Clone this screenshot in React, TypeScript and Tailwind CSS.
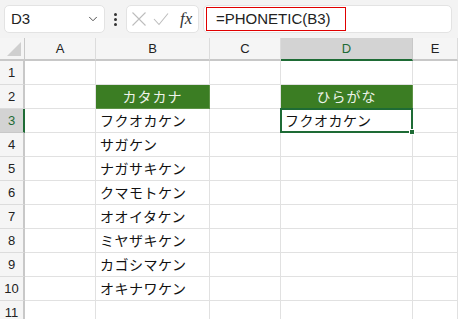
import { ChevronDown } from 'lucide-react'

const cols = ['A', 'B', 'C', 'D', 'E']
const katakana = ['フクオカケン', 'サガケン', 'ナガサキケン', 'クマモトケン', 'オオイタケン', 'ミヤザキケン', 'カゴシマケン', 'オキナワケン']

const jp = { fontFamily: '"Noto Sans CJK JP", "Noto Sans", sans-serif' }
const ui = { fontFamily: '"Liberation Sans", Arial, sans-serif' }

function Cell({ row, col }: { row: number; col: number }) {
  if (row === 2 && col === 1) {
    return (
      <div className="bg-[#3b7d23] border-r border-b border-[#5d9246] flex items-center justify-center text-[14px] text-[#eef3ea] tracking-[1px]" style={jp}>
        カタカナ
      </div>
    )
  }
  if (row === 2 && col === 3) {
    return (
      <div className="bg-[#3b7d23] border-r border-b border-[#5d9246] flex items-center justify-center text-[14px] text-[#eef3ea] tracking-[1px]" style={jp}>
        ひらがな
      </div>
    )
  }
  if (row === 3 && col === 3) {
    return (
      <div className="relative bg-white border-2 border-[#1e6b35] -mt-px -ml-px flex items-center pl-[3px] text-[14px] text-[#111] tracking-[0.5px]" style={jp}>
        フクオカケン
        <div className="absolute -right-[4px] -bottom-[4px] w-[6px] h-[6px] bg-[#1e6b35] border border-white" />
      </div>
    )
  }
  const text = col === 1 && row >= 3 && row <= 10 ? katakana[row - 3] : ''
  return (
    <div className="bg-white border-r border-b border-[#e1e1e1] flex items-center pl-[4px] text-[14px] text-[#111] tracking-[0.5px]" style={jp}>
      {text}
    </div>
  )
}

export default function App() {
  const rows = Array.from({ length: 11 }, (_, i) => i + 1)
  return (
    <div className="w-[458px] h-[319px] overflow-hidden bg-white" style={ui}>
      {/* Toolbar */}
      <div className="h-[38px] bg-[#f3f3f3] flex items-center pl-[4px] gap-0">
        <div className="w-[101px] h-[28px] bg-white border border-[#e3e3e3] rounded-[5px] flex items-center justify-between pl-[6px] pr-[4px]">
          <span className="text-[15px] text-[#222]">D3</span>
          <ChevronDown className="w-[14px] h-[14px] text-[#444]" strokeWidth={1.6} />
        </div>
        <div className="w-[21px] flex flex-col items-center gap-[2px]">
          <div className="w-[3px] h-[3px] bg-[#333] rounded-full" />
          <div className="w-[3px] h-[3px] bg-[#333] rounded-full" />
          <div className="w-[3px] h-[3px] bg-[#333] rounded-full" />
        </div>
        <div className="w-[73px] h-[28px] bg-white border border-[#e3e3e3] rounded-[5px] flex items-center pl-[4px] gap-[6px]">
          <svg width="16" height="16" viewBox="0 0 16 16" fill="none" stroke="#bdbdbd" strokeWidth="1.1">
            <path d="M1.5 1.5 L14.5 14.5 M14.5 1.5 L1.5 14.5" />
          </svg>
          <svg width="16" height="16" viewBox="0 0 16 16" fill="none" stroke="#bdbdbd" strokeWidth="1.1">
            <path d="M1 8 L6 13.5 L15 2.5" />
          </svg>
          <span className="ml-[5px] text-[17px] italic text-[#333]" style={{ fontFamily: '"Liberation Serif", serif' }}>fx</span>
        </div>
        <div className="ml-[4px] w-[249px] h-[28px] bg-white border border-[#e3e3e3] rounded-[5px] flex items-center pl-[2px]">
          <div className="w-[140px] h-[24px] border-[1.5px] border-[#e00000] flex items-center pl-[9px] text-[15px] text-[#222]">
            =PHONETIC(B3)
          </div>
        </div>
      </div>

      {/* Grid */}
      <div className="grid grid-cols-[25px_71px_114px_71px_132px_45px] grid-rows-[23px_repeat(11,24px)]">
        <div className="bg-[#f5f5f5] border-r border-b-2 border-[#c8c8c8] relative">
          <div className="absolute right-[3px] bottom-[3px] w-0 h-0 border-l-[14px] border-l-transparent border-b-[14px] border-b-[#cfcfcf]" />
        </div>
        {cols.map((c, i) =>
          i === 3 ? (
            <div key={c} className="bg-[#d3d3d3] border-r border-[#c8c8c8] border-b-2 border-b-[#1e6b35] flex items-center justify-center text-[13px] text-[#1e6b35]">
              {c}
            </div>
          ) : (
            <div key={c} className="bg-[#f5f5f5] border-r border-[#dcdcdc] border-b-2 border-b-[#c8c8c8] flex items-center justify-center text-[13px] text-[#222]">
              {c}
            </div>
          )
        )}
        {rows.map((r) => (
          <div key={r} className="contents">
            {r === 3 ? (
              <div className="bg-[#d3d3d3] border-r-2 border-r-[#1e6b35] border-b border-[#c8c8c8] flex items-center justify-center text-[13px] text-[#1e6b35]">
                {r}
              </div>
            ) : (
              <div className="bg-[#f5f5f5] border-r-2 border-r-[#c8c8c8] border-b border-[#dcdcdc] flex items-center justify-center text-[13px] text-[#222]">
                {r}
              </div>
            )}
            {cols.map((c, ci) => (
              <Cell key={c} row={r} col={ci} />
            ))}
          </div>
        ))}
      </div>
    </div>
  )
}
